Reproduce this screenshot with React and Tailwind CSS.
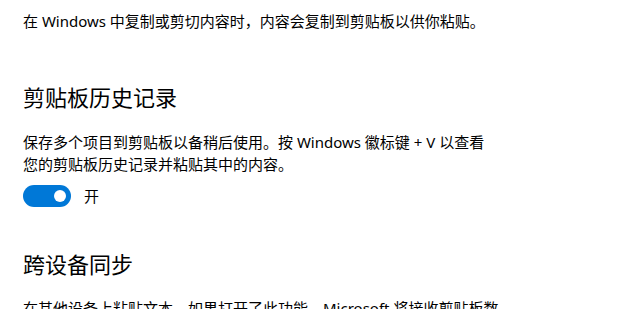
export default function App() {
    const font = { fontFamily: '"Noto Sans", "Noto Sans CJK SC", sans-serif' };

    return (
        <div className="w-[620px] h-[309px] overflow-hidden bg-white text-black pl-[23px]" style={font}>
            <p className="pt-[10px] text-[15px] leading-[22px]">
                在 Windows 中复制或剪切内容时，内容会复制到剪贴板以供你粘贴。
            </p>

            <h2 className="mt-[50px] text-[22px] leading-[30px]">剪贴板历史记录</h2>

            <p className="mt-[19px] text-[15px] leading-[22px] whitespace-nowrap">
                保存多个项目到剪贴板以备稍后使用。按 Windows 徽标键 + V 以查看
                <br />
                您的剪贴板历史记录并粘贴其中的内容。
            </p>

            <div className="mt-[10px] flex items-center gap-[13px]">
                <div className="w-[48px] h-[22px] rounded-full bg-[#0078d7] flex items-center justify-end pr-[5px]">
                    <div className="w-[12px] h-[12px] rounded-full bg-white" />
                </div>
                <span className="text-[15px] leading-[22px]">开</span>
            </div>

            <h2 className="mt-[42px] text-[22px] leading-[30px]">跨设备同步</h2>

            <p className="mt-[18px] text-[15px] leading-[22px] whitespace-nowrap">
                在其他设备上粘贴文本。如果打开了此功能，Microsoft 将接收剪贴板数
                <br />
                据并将其同步到你的设备。
            </p>
        </div>
    );
}
